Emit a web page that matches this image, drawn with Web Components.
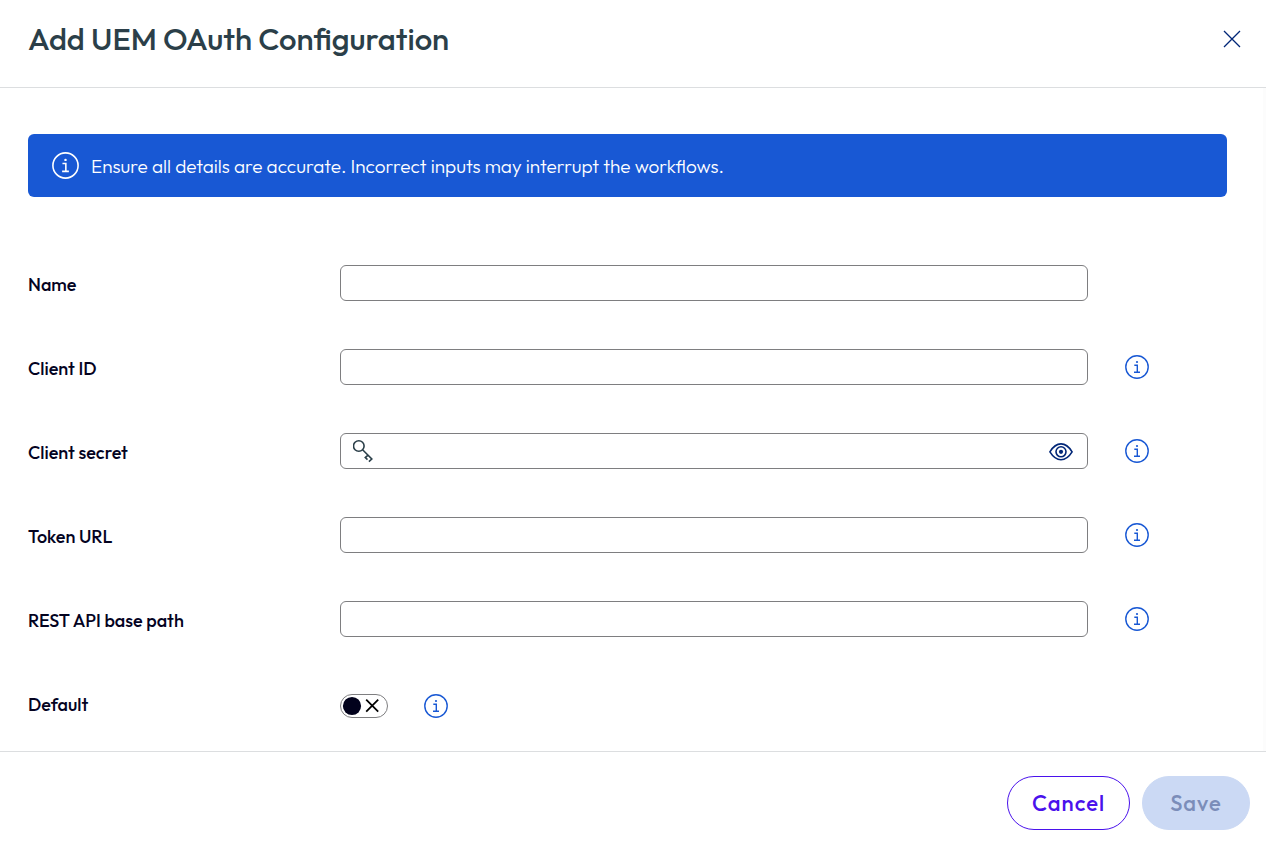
<!DOCTYPE html>
<html lang="en">
<head>
<meta charset="utf-8">
<meta name="viewport" content="width=device-width, initial-scale=1">
<title>Add UEM OAuth Configuration</title>
<style>
  body {
    margin: 0;
    background: #fff;
    color: #04031f;
    font-family: Outfit, Lato, "Open Sans", sans-serif;
    --line: #dcdee0;
    --outline: #7e7e80;
    --accent: #1858d4;
    --navy: #002677;
  }
</style>
</head>
<body>
<config-dialog>
  <span slot="title">Add UEM OAuth Configuration</span>
  <info-banner>Ensure all details are accurate. Incorrect inputs may interrupt the workflows.</info-banner>
  <config-form>
    <text-field label="Name"></text-field>
    <text-field label="Client ID" hint></text-field>
    <secret-field label="Client secret" hint></secret-field>
    <text-field label="Token URL" hint></text-field>
    <text-field label="REST API base path" hint></text-field>
    <toggle-field label="Default"></toggle-field>
  </config-form>
  <pill-button slot="actions">Cancel</pill-button>
  <pill-button slot="actions" disabled>Save</pill-button>
</config-dialog>

<script>
const define = (name, html, setup) => {
  const template = document.createElement('template');
  template.innerHTML = html;
  customElements.define(name, class extends HTMLElement {
    constructor() {
      super();
      this.attachShadow({ mode: 'open' }).append(template.content.cloneNode(true));
    }
    connectedCallback() {
      if (setup) setup(this, this.shadowRoot);
    }
  });
};

const applyLabel = (host, root) => {
  root.querySelector('label').textContent = host.getAttribute('label');
  const hint = root.querySelector('hint-button');
  if (hint && root.querySelector('input[type=text], input[type=password]') && !host.hasAttribute('hint')) hint.remove();
};

const fieldStyles = `
  *, *::before, *::after { box-sizing: border-box; }
  :host {
    display: grid;
    grid-template-columns: 312px minmax(0, 1fr) 139px;
    align-items: center;
    min-height: 36px;
  }
  label { padding-top: 4px; font-size: 18px; line-height: 24px; font-weight: 500; }
  hint-button { margin-left: 37px; }
  .box {
    display: block;
    width: 100%;
    height: 36px;
    padding: 0 12px;
    border: 1px solid var(--outline);
    border-radius: 6px;
    background: #fff;
    color: inherit;
    font: inherit;
    font-size: 18px;
  }`;

define('info-icon', `
  <style>
    :host { display: block; width: 24px; height: 24px; flex: none; }
    svg { display: block; width: 100%; height: 100%; }
  </style>
  <svg viewBox="0 0 24 24" fill="none" stroke="currentColor" stroke-width="1.4" aria-hidden="true">
    <circle cx="12" cy="12" r="11.2"/>
    <path d="M9.300 10.200h3v6.900M9 17.200h6"/>
    <circle cx="12" cy="7" r="1.100" fill="currentColor" stroke="none"/>
  </svg>`);

define('hint-button', `
  <style>
    :host { display: block; width: 24px; height: 24px; }
    button { display: block; padding: 0; border: 0; background: none; color: var(--accent); cursor: pointer; }
  </style>
  <button type="button" aria-label="More information"><info-icon></info-icon></button>`);

define('info-banner', `
  <style>
    :host {
      display: flex; align-items: center; gap: 12px; box-sizing: border-box;
      min-height: 63px; padding: 8px 24px; border-radius: 6px;
      background: var(--accent); color: #fff; font-size: 19px; line-height: 24px; font-weight: 300;
    }
    info-icon { width: 27px; height: 27px; }
  </style>
  <info-icon></info-icon><span><slot></slot></span>`);

define('text-field', `
  <style>${fieldStyles}</style>
  <label for="field"></label>
  <input class="box" id="field" type="text">
  <hint-button></hint-button>`, applyLabel);

define('secret-field', `
  <style>${fieldStyles}
    .box { display: flex; align-items: center; gap: 12px; padding: 0 14px 0 12px; }
    input { flex: 1; min-width: 0; padding: 0; border: 0; outline: 0; background: none; font: inherit; }
    button { flex: none; padding: 0; border: 0; background: none; color: var(--navy); cursor: pointer; }
    svg { display: block; flex: none; fill: none; stroke: currentColor; stroke-width: 1.6; }
    .key { color: #2b3f49; }
  </style>
  <label for="field"></label>
  <div class="box">
    <svg class="key" width="21" height="24" viewBox="0 0 21 24" aria-hidden="true">
      <circle cx="5.8" cy="7" r="5.300"/><path d="M9.600 10.800l9.200 9.200-2.900 2.600M15 16.200l-2.700 2.400 2.200 2"/>
    </svg>
    <input id="field" type="password">
    <button type="button" aria-label="Show client secret">
      <svg width="24" height="20" viewBox="0 0 24 20">
        <path d="M.9 10.800C4.200 5.500 7.800 2.900 12 2.900S19.800 5.500 23.100 10.800C19.800 16.100 16.200 18.700 12 18.700S4.200 16.100.9 10.800Z"/>
        <circle cx="12" cy="10.800" r="5"/><circle cx="12" cy="10.800" r="2.100" fill="currentColor" stroke="none"/>
      </svg>
    </button>
  </div>
  <hint-button></hint-button>`, applyLabel);

define('toggle-field', `
  <style>${fieldStyles}
    .controls { display: flex; padding-top: 6px; }
    .controls hint-button { margin-left: 36px; }
    input {
      appearance: none; width: 48px; height: 24px; margin: 0; cursor: pointer;
      border: 1px solid var(--outline); border-radius: 12px;
    }
    .switch { display: grid; }
    .switch > * { grid-area: 1 / 1; }
    svg { display: block; pointer-events: none; }
    .on, input:checked + svg .off { display: none; }
    input:checked + svg .on { display: inline; }
  </style>
  <label for="field"></label>
  <div class="controls">
    <span class="switch">
      <input id="field" type="checkbox" role="switch">
      <svg width="48" height="24" viewBox="0 0 48 24" aria-hidden="true" fill="none" stroke="#000" stroke-width="1.8">
        <g class="off"><circle cx="12" cy="12" r="9.100" fill="#02021c" stroke="none"/><path d="M26.200 5.600l12 12M38.200 5.600l-12 12"/></g>
        <g class="on"><circle cx="36" cy="12" r="9.100" fill="#02021c" stroke="none"/><path d="M9 12l4 4 8-9"/></g>
      </svg>
    </span>
    <hint-button></hint-button>
  </div>`, applyLabel);

define('config-form', `
  <style>
    :host { display: block; }
    form { display: grid; gap: 48px; }
  </style>
  <form><slot></slot></form>`);

define('pill-button', `
  <style>
    :host { display: block; }
    button {
      display: block; box-sizing: border-box; height: 54px; min-width: 108px; padding: 0 24px;
      border: 1px solid #4a12ec; border-radius: 27px; background: #fff; color: #4a12ec;
      font: inherit; font-size: 22px; font-weight: 500; letter-spacing: 1px; cursor: pointer;
    }
    button:disabled { border-color: #cbd9f4; background: #cbd9f4; color: #7b8db9; cursor: default; }
  </style>
  <button type="button"><slot></slot></button>`,
  (host, root) => { root.querySelector('button').disabled = host.hasAttribute('disabled'); });

define('config-dialog', `
  <style>
    :host { display: flex; flex-direction: column; min-height: 100vh; }
    header {
      display: flex; align-items: center; justify-content: space-between;
      padding: 19px 22px 28px 28px; border-bottom: 1px solid var(--line);
    }
    h1 { margin: 0; color: #2b3f49; font-size: 31px; line-height: 40px; font-weight: 500; }
    header button { padding: 0; border: 0; background: none; color: var(--navy); cursor: pointer; }
    svg { display: block; }
    main {
      flex: 1; display: flex; flex-direction: column; gap: 68px;
      padding: 46px 36px 30px 28px; border-right: 3px solid #fcfcfc;
    }
    footer {
      display: flex; justify-content: flex-end; gap: 12px;
      padding: 24px 16px 17px; border-top: 1px solid var(--line);
    }
  </style>
  <header>
    <h1><slot name="title"></slot></h1>
    <button type="button" aria-label="Close">
      <svg width="24" height="24" viewBox="0 0 24 24" fill="none" stroke="currentColor" stroke-width="1.300"><path d="M4 4l16 16M20 4L4 20"/></svg>
    </button>
  </header>
  <main><slot></slot></main>
  <footer><slot name="actions"></slot></footer>`);
</script>
</body>
</html>
